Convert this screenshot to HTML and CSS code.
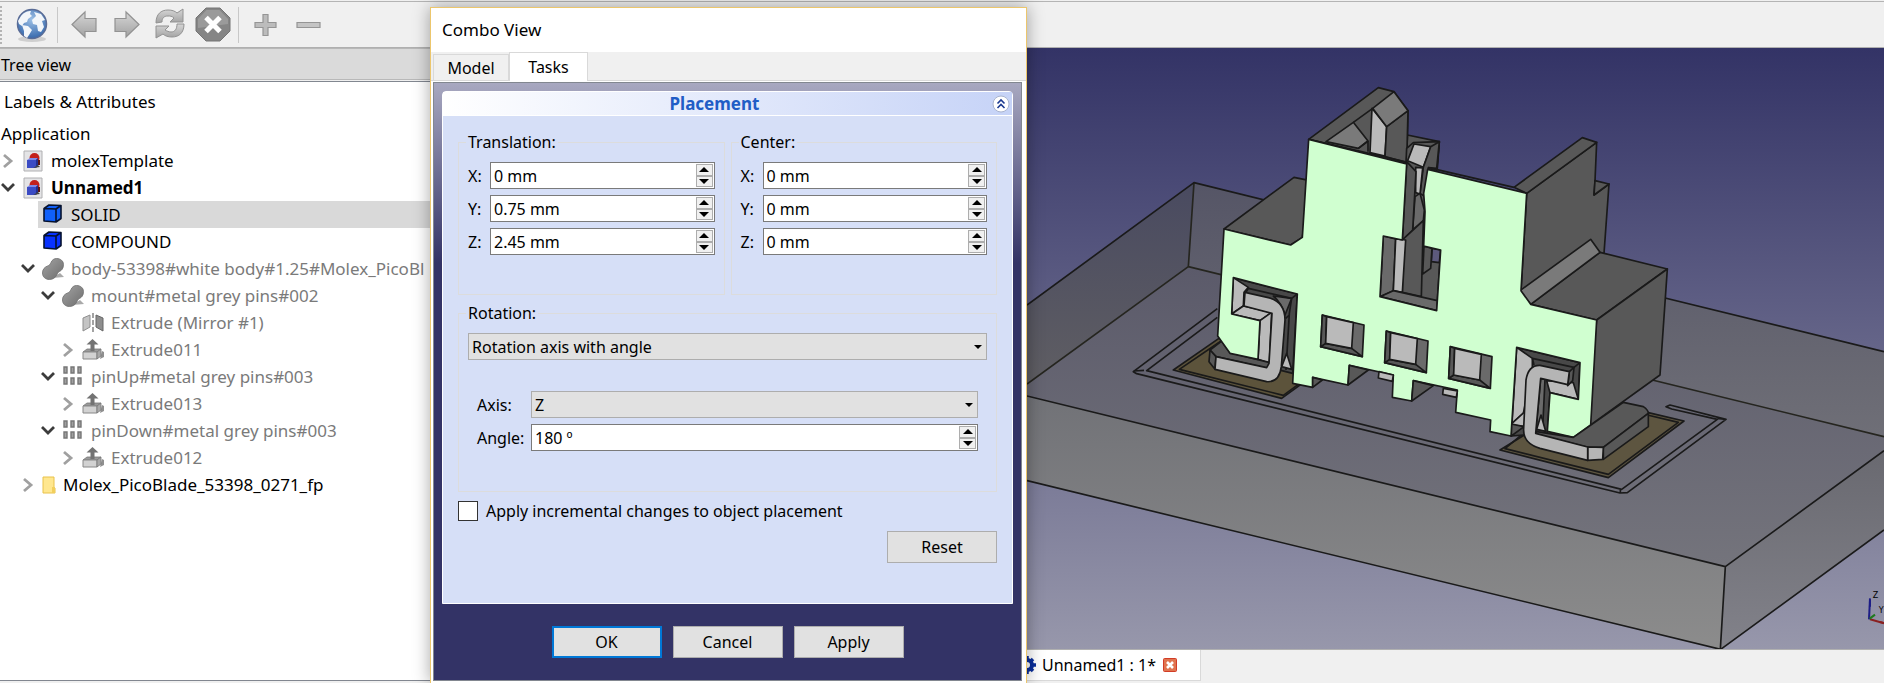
FILE: index.html
```html
<!DOCTYPE html>
<html lang="en">
<head>
<meta charset="utf-8">
<title>Unnamed1</title>
<link rel="stylesheet" href="styles.css">
</head>
<body>
<svg class="defs" width="0" height="0" aria-hidden="true">
  <defs>
    <linearGradient id="metal" x1="0" y1="0" x2="0" y2="1"><stop offset="0" stop-color="#d6d6d6"/><stop offset="1" stop-color="#a2a2a2"/></linearGradient>
    <linearGradient id="stone" x1="0" y1="0" x2="1" y2="1"><stop offset="0" stop-color="#a4a4a4"/><stop offset="1" stop-color="#6c6c6c"/></linearGradient>
    <radialGradient id="ocean" cx=".5" cy=".35" r=".7"><stop offset="0" stop-color="#9cc0e6"/><stop offset="1" stop-color="#2f62a8"/></radialGradient>
    <symbol id="i-closed" viewBox="0 0 18 18"><path d="M4 3l7 6-7 6" fill="none" stroke="#a0a0a0" stroke-width="2.800"/></symbol>
    <symbol id="i-open" viewBox="0 0 18 18"><path d="M2 5l6 6 6-6" fill="none" stroke="#3c3c3c" stroke-width="2.800"/></symbol>
    <symbol id="i-doc" viewBox="0 0 22 22">
      <path d="M2 1h18v20H2z" fill="#e4e4e6" stroke="#b0b0b2"/>
      <circle cx="12.500" cy="8" r="5" fill="#c3201b"/><path d="M16 10h2v5h-2z" fill="#5d1512"/>
      <path d="M5 10l3-2h8l-2 2z" fill="#7d8ae8"/><path d="M5 10h9v8H5z" fill="#3b4bc4"/><path d="M14 10l2-2v8l-2 2z" fill="#222f90"/><path d="M11 18l7-1-2-2z" fill="#444"/>
    </symbol>
    <symbol id="i-cube" viewBox="0 0 22 22">
      <path d="M2 4.500L7 1l12 .5v13L14 18 2 17z" fill="currentColor"/>
      <path d="M2 4.500L14 5v13L2 17zM2 4.500L7 1l12 .5L14 5M19 1.500v13L14 18" fill="none" stroke="#06122e" stroke-width="1.600" stroke-linejoin="round"/>
    </symbol>
    <symbol id="i-fuse" viewBox="0 0 22 22">
      <path d="M10 20l12-1-4-4z" fill="#a9a9a9"/>
      <path d="M14.500 .5c4 0 7 2.500 7 6 0 4-2 6-4 7-2 1-2 2-3 4-1.500 2.500-4 4-7 4-4 0-7-2.500-7-6.500 0-4 2.500-6 5-7 2-.8 2.500-1.500 3.500-3.500 1-2.500 3-4 5.500-4z" fill="url(#stone)" stroke="#6e6e6e" stroke-width=".8"/>
    </symbol>
    <symbol id="i-mirror" viewBox="0 0 22 22">
      <path d="M1 6l7-3v12l-7 4z" fill="#c4c4c4" stroke="#8e8e8e"/><path d="M14 3l7 3v13l-7-4z" fill="#8e8e8e" stroke="#666"/>
      <path d="M11 1v20" stroke="#8c8c8c" stroke-width="1.600" stroke-dasharray="5 2"/>
    </symbol>
    <symbol id="i-extrude" viewBox="0 0 22 22">
      <path d="M18 20l4-2v-5l-2-1z" fill="#8f8f8f"/>
      <path d="M1 13l4-3h14l-4 3z" fill="#9a9a9a" stroke="#777" stroke-width=".8"/><path d="M1 13h14v7H1z" fill="#d2d2d2" stroke="#888"/><path d="M15 13l4-3v7l-4 3z" fill="#a8a8a8" stroke="#777" stroke-width=".8"/>
      <path d="M10.500 0l6 5.500h-4V12h-4V5.500h-4z" fill="#737373"/>
    </symbol>
    <symbol id="i-array" viewBox="0 0 22 22">
      <g fill="#a0a0a0" stroke="#777" stroke-width="1.400"><path d="M2 1h3v6H2zM9 1h3v6H9zM16 1h3v6h-3zM2 12h3v6H2zM9 12h3v6H9zM16 12h3v6h-3z"/></g>
    </symbol>
    <symbol id="i-folder" viewBox="0 0 14 18"><path d="M1 1h11v10l1 1v5H1z" fill="#ffe78f" stroke="#e9c24a"/><path d="M10 11h3v6h-3z" fill="#f2cf5c"/></symbol>
  </defs>
</svg>

<div class="app">
  <header class="toolbar">
    <span class="grip"></span>
    <button class="tool" aria-label="Open website"><svg viewBox="0 0 36 36">
      <ellipse cx="18" cy="32" rx="14" ry="3" fill="#cfcfcf"/>
      <circle cx="18" cy="17" r="14.500" fill="url(#ocean)" stroke="#5a6c96" stroke-width="1.500"/>
      <path d="M7 9c3-4 7-5 10-5l-1 3 2 2-4 3-1 3-3 1-2 3-3-2-1-3zM8 18l6 1 4 4-3 5-2 3-3-2v-5zM20 5l7 2 4 6-3 1 2 6-3 5-3-1-1-6-4-1-1-4 4-4z" fill="#f2f6fa"/></svg></button>
    <span class="rule"></span>
    <button class="tool" aria-label="Back" disabled><svg viewBox="0 0 36 36"><path d="M6 17.500L19 5v6.500h11v13H19V30z" fill="url(#metal)" stroke="#929292" stroke-width="1.200"/></svg></button>
    <button class="tool" aria-label="Forward" disabled><svg viewBox="0 0 36 36"><path d="M30 17.500L17 5v6.500H6v13h11V30z" fill="url(#metal)" stroke="#929292" stroke-width="1.200"/></svg></button>
    <button class="tool" aria-label="Reload" disabled><svg viewBox="0 0 36 36">
      <path d="M4 16C4 7 9 3 16 3c4 0 7 1 9 3l6-4v13H18l4-4c-2-2-4-2-6-2-4 0-6 2-6 6z" fill="url(#metal)" stroke="#929292"/>
      <path d="M32 17c0 9-5 13-12 13-4 0-7-1-9-3l-7 4V19h13l-4 4c2 1 4 2 6 2 4 0 6-3 6-8z" fill="url(#metal)" stroke="#929292"/></svg></button>
    <button class="tool" aria-label="Stop" disabled><svg viewBox="0 0 36 36">
      <path d="M11 1h14l10 10v13L25 34H11L1 24V11z" fill="#858585" stroke="#747474"/><path d="M11.500 3h13L33 12v5L3 21v-9z" fill="#9a9a9a"/>
      <path d="M11 10.500l14 14M25 10.500l-14 14" stroke="#fff" stroke-width="5"/></svg></button>
    <span class="rule"></span>
    <button class="tool" aria-label="Zoom in" disabled><svg viewBox="0 0 36 36"><path d="M16 7.500h5v8h8v5h-8v8h-5v-8H8v-5h8z" fill="#bcbcbc" stroke="#959595" stroke-width="1.200"/></svg></button>
    <button class="tool" aria-label="Zoom out" disabled><svg viewBox="0 0 36 36"><path d="M7 15.500h23v5H7z" fill="#c4c4c4" stroke="#959595" stroke-width="1.200"/></svg></button>
  </header>

  <aside class="dock">
    <h2 class="dock-title">Tree view</h2>
    <div class="tree">
      <div class="tree-head">Labels &amp; Attributes</div>
      <div class="tree-root">Application</div>
      <ul class="rows">
        <li class="row"><svg class="arrow"><use href="#i-closed"/></svg><svg class="icon doc"><use href="#i-doc"/></svg><span>molexTemplate</span></li>
        <li class="row strong"><svg class="arrow"><use href="#i-open"/></svg><svg class="icon doc"><use href="#i-doc"/></svg><span>Unnamed1</span></li>
        <li class="row l1 selected"><svg class="icon cube-a"><use href="#i-cube"/></svg><span>SOLID</span></li>
        <li class="row l1"><span class="arrow"></span><svg class="icon cube-b"><use href="#i-cube"/></svg><span>COMPOUND</span></li>
        <li class="row l1 dim"><svg class="arrow"><use href="#i-open"/></svg><svg class="icon"><use href="#i-fuse"/></svg><span>body-53398#white body#1.25#Molex_PicoBl</span></li>
        <li class="row l2 dim"><svg class="arrow"><use href="#i-open"/></svg><svg class="icon"><use href="#i-fuse"/></svg><span>mount#metal grey pins#002</span></li>
        <li class="row l3 dim"><span class="arrow"></span><svg class="icon"><use href="#i-mirror"/></svg><span>Extrude (Mirror #1)</span></li>
        <li class="row l3 dim"><svg class="arrow"><use href="#i-closed"/></svg><svg class="icon"><use href="#i-extrude"/></svg><span>Extrude011</span></li>
        <li class="row l2 dim"><svg class="arrow"><use href="#i-open"/></svg><svg class="icon"><use href="#i-array"/></svg><span>pinUp#metal grey pins#003</span></li>
        <li class="row l3 dim"><svg class="arrow"><use href="#i-closed"/></svg><svg class="icon"><use href="#i-extrude"/></svg><span>Extrude013</span></li>
        <li class="row l2 dim"><svg class="arrow"><use href="#i-open"/></svg><svg class="icon"><use href="#i-array"/></svg><span>pinDown#metal grey pins#003</span></li>
        <li class="row l3 dim"><svg class="arrow"><use href="#i-closed"/></svg><svg class="icon"><use href="#i-extrude"/></svg><span>Extrude012</span></li>
        <li class="row l1"><svg class="arrow"><use href="#i-closed"/></svg><svg class="icon folder"><use href="#i-folder"/></svg><span>Molex_PicoBlade_53398_0271_fp</span></li>
      </ul>
    </div>
  </aside>

  <section class="dialog" aria-label="Combo View">
    <h1 class="dialog-title">Combo View</h1>
    <div class="tabs" role="tablist">
      <button class="tab" role="tab">Model</button>
      <button class="tab active" role="tab" aria-selected="true">Tasks</button>
    </div>
    <div class="pane">
      <div class="card">
        <div class="card-head"><h2>Placement</h2>
          <button class="collapse" aria-label="Collapse"><svg viewBox="0 0 18 18"><circle cx="9" cy="9" r="8" fill="#fff" stroke="#a9b4cf"/><path d="M5.500 8.500L9 5l3.500 3.500M5.500 13L9 9.500l3.500 3.500" fill="none" stroke="#1c3a90" stroke-width="1.600"/></svg></button>
        </div>
        <div class="card-body">
          <div class="vectors">
            <fieldset>
              <legend>Translation:</legend>
              <div class="field"><label for="tx">X:</label><div class="spin"><input id="tx" value="0 mm"><div class="steps"><button class="up" aria-label="Increase"></button><button class="down" aria-label="Decrease"></button></div></div></div>
              <div class="field"><label for="ty">Y:</label><div class="spin"><input id="ty" value="0.75 mm"><div class="steps"><button class="up" aria-label="Increase"></button><button class="down" aria-label="Decrease"></button></div></div></div>
              <div class="field"><label for="tz">Z:</label><div class="spin"><input id="tz" value="2.45 mm"><div class="steps"><button class="up" aria-label="Increase"></button><button class="down" aria-label="Decrease"></button></div></div></div>
            </fieldset>
            <fieldset>
              <legend>Center:</legend>
              <div class="field"><label for="cx">X:</label><div class="spin"><input id="cx" value="0 mm"><div class="steps"><button class="up" aria-label="Increase"></button><button class="down" aria-label="Decrease"></button></div></div></div>
              <div class="field"><label for="cy">Y:</label><div class="spin"><input id="cy" value="0 mm"><div class="steps"><button class="up" aria-label="Increase"></button><button class="down" aria-label="Decrease"></button></div></div></div>
              <div class="field"><label for="cz">Z:</label><div class="spin"><input id="cz" value="0 mm"><div class="steps"><button class="up" aria-label="Increase"></button><button class="down" aria-label="Decrease"></button></div></div></div>
            </fieldset>
          </div>
          <fieldset class="rotation">
            <legend>Rotation:</legend>
            <div class="combo"><select aria-label="Rotation mode"><option>Rotation axis with angle</option></select></div>
            <div class="axis">
              <div class="field"><label for="axis">Axis:</label><div class="combo"><select id="axis"><option>Z</option></select></div></div>
              <div class="field"><label for="angle">Angle:</label><div class="spin"><input id="angle" value="180 º"><div class="steps"><button class="up" aria-label="Increase"></button><button class="down" aria-label="Decrease"></button></div></div></div>
            </div>
          </fieldset>
          <label class="check"><input type="checkbox">Apply incremental changes to object placement</label>
          <div class="reset"><button class="btn">Reset</button></div>
        </div>
      </div>
      <div class="actions"><button class="btn primary">OK</button><button class="btn">Cancel</button><button class="btn">Apply</button></div>
    </div>
  </section>

  <main class="view">
    <svg class="scene" viewBox="21 24 2571 1803" preserveAspectRatio="xMidYMid slice" role="img" aria-label="Connector model on a board">
      <defs>
        <linearGradient id="floor" gradientUnits="userSpaceOnUse" x1="0" y1="680" x2="0" y2="1580"><stop offset="0" stop-color="#5b5a6a"/><stop offset="1" stop-color="#74747c"/></linearGradient>
        <linearGradient id="wall" gradientUnits="userSpaceOnUse" x1="0" y1="428" x2="0" y2="1190"><stop offset="0" stop-color="#555566"/><stop offset="1" stop-color="#6f6f77"/></linearGradient>
        <linearGradient id="left" gradientUnits="userSpaceOnUse" x1="0" y1="428" x2="0" y2="1032"><stop offset="0" stop-color="#494a60"/><stop offset="1" stop-color="#5f5e63"/></linearGradient>
        <linearGradient id="front" gradientUnits="userSpaceOnUse" x1="0" y1="1068" x2="0" y2="1828"><stop offset="0" stop-color="#717277"/><stop offset="1" stop-color="#8c8c8c"/></linearGradient>
        <linearGradient id="side" gradientUnits="userSpaceOnUse" x1="0" y1="1232" x2="0" y2="1828"><stop offset="0" stop-color="#696970"/><stop offset="1" stop-color="#82828a"/></linearGradient>
        <g id="window" stroke="#1a1a1a" stroke-width="5" stroke-linejoin="round">
          <path class="g2" d="M907 825L1032 855L1027 950L902 920Z"/><path class="g1" d="M902 920L917 910L995 925L1027 950Z"/><path class="g1" d="M907 825L920 830L917 910L902 920Z"/><path class="g4" d="M920 830L1000 848L995 925L917 910Z"/>
        </g>
      </defs>
      <g class="solid">
        <path class="bare" fill="url(#left)" d="M21 795L522 428L505 680L21 1032Z"/>
        <path class="bare" fill="url(#wall)" d="M522 428L2592 935V1190L505 680Z"/>
        <path class="bare" fill="url(#floor)" d="M21 1032L505 680L2592 1190V1232L2116 1580L21 1068Z"/>
        <path class="bare" fill="url(#front)" d="M21 1068L2116 1580L2100 1828L21 1322Z"/>
        <path class="bare" fill="url(#side)" d="M2116 1580L2592 1232V1470L2102 1828Z"/>
        <path class="line faint" d="M21 1032L505 680L2592 1190M522 428L505 680"/>
        <path class="line" d="M21 795L522 428L2592 935M21 1068L2116 1580L2592 1232M21 1322L2102 1828L2592 1470M2116 1580L2101 1828"/>
        <path class="line" d="M592 806L340 995L350 1001L1800 1359L1822 1358L2118 1138L1950 1095L1938 1100L1955 1107L2092 1138L1805 1348L380 992L592 832M340 993L372 991M2092 1135L2118 1138M1801 1345V1360"/>
        <path fill="#5c533b" d="M600 893L460 990L785 1075L850 1028L820 940Z"/><path class="line" d="M612 897L478 988L790 1066L835 1033"/>
        <path fill="#5d5540" d="M1440 1230L1570 1150L1885 1118L1992 1143L1765 1313Z"/><path class="line" d="M1510 1180L1455 1226L1765 1303L1975 1147L1882 1125"/>

        <path class="g1" d="M612 567L822 412L870 422L847 592L812 615Z"/>
        <path class="g1" d="M1520 460L1730 307L1725 422L1722 465L1767 432L1752 640L1710 680L1530 740L1503 752Z"/>
        <path class="g1" d="M1482 442L1687 293L1730 307L1520 460Z"/>
        <path class="g1" d="M1725 422L1767 432L1722 465Z"/>
        <path class="g1" d="M1532 793L1740 637L1942 687L1730 840Z"/>
        <path class="g3" d="M1500 752L1712 598L1740 637L1532 793Z"/>
        <path class="g1" d="M1730 840L1942 687L1920 1005L1660 1192L1700 1155Z"/>

        <path class="g1" d="M1162 285L1258 305L1250 395L1160 372Z"/>
        <path class="g1" d="M866 298L1075 143L1122 155L1164 212L1160 372Z"/>
        <path class="g3" d="M918 305L1000 247L1044 303L1015 325Z"/>
        <path class="line" d="M1000 247L1058 205M1044 303V335M1044 303L1015 325"/>
        <path class="g4" d="M1056 205L1100 260L1095 348L1050 338Z"/>
        <path class="g1" d="M1100 260L1164 212L1160 368L1095 350Z"/>
        <path class="g3" d="M1058 205L1122 155L1164 212L1100 260Z"/>
        <path class="g1" d="M1160 325L1180 308L1258 305L1252 385L1220 390L1210 620L1262 630L1250 812L1080 770L1090 588L1147 600Z"/>
        <path class="g4" d="M1182 312L1232 320L1210 382L1163 362Z"/>
        <path class="g1" d="M1232 320L1258 305L1250 385L1225 383L1215 470L1200 460L1210 382Z"/>
        <path class="g4" d="M1187 382L1208 384L1200 462L1187 458Z"/>
        <path class="g2" d="M1185 470L1200 460L1213 510L1210 542L1178 570Z"/>
        <path class="g1" d="M1160 365L1188 395L1178 570L1147 600Z"/>
        <path class="g1" d="M1147 600L1210 542L1204 770L1147 757Z"/>
        <path class="g2" d="M1090 588L1127 597L1120 752L1080 770Z"/>
        <path class="g4" d="M1127 597L1157 600L1147 757L1120 752Z"/>
        <path fill="#5d5a7c" d="M1236 625L1262 630L1258 668L1234 665Z"/>
        <path class="g1" d="M1212 618L1236 625L1232 685L1208 702Z"/>
        <path class="g2" d="M1080 770L1120 752L1252 782L1250 812Z"/>
        <path class="line" d="M866 298L1160 366M1225 383L1482 442"/>

        <path class="g0" d="M640 713L832 762L818 1000L740 980L635 822Z"/>
        <path class="g2" d="M760 768L815 775L795 825Q785 790 760 768Z"/>
        <path class="line" d="M685 745L815 775L832 762M815 775L808 820L798 990M685 745L678 757M797 835L808 825"/>
        <path class="g4" d="M640 713L685 742L672 757L670 798L635 822Z"/>
        <path class="g4" d="M635 822L670 798L755 817L720 842Z"/>
        <path class="g4" d="M720 842L755 817L748 970L714 958Z"/>
        <path class="g4" d="M800 940L815 988L785 980Z"/>
        <path class="g1" d="M570 930L605 903L630 938L750 968L742 985L588 950Z"/>
        <path class="g1" d="M570 930L588 950L585 988L567 965Z"/>
        <path class="g5" d="M675 757L745 773Q795 785 795 840L784 980Q778 1028 740 1025L585 988L588 950L740 983L747 970L756 820L672 798Z"/>

        <path class="g0" d="M1490 922L1680 968L1675 1078L1590 1058L1582 1180L1473 1188Z"/>
        <path class="g4" d="M1490 922L1537 955V985L1510 1120L1476 1150Z"/>
        <path class="g4" d="M1476 1150L1520 1110V1160L1474 1155Z"/>
        <path class="g1" d="M1474 1152L1512 1160L1474 1188Z"/>
        <path class="line" d="M1537 955L1662 982L1680 968M1537 955L1542 975"/>
        <path class="g4" d="M1580 1022L1660 1028L1675 1078L1590 1058Z"/>
        <path class="g2" d="M1562 1016L1575 1018L1568 1165L1548 1170Z"/>
        <path class="g4" d="M1563 1125L1577 1174L1550 1168Z"/>

        <path class="green" d="M866 298L1160 372L1147 600L1090 588L1080 770L1250 812L1262 630L1211 618L1215 515L1211 460L1223 388L1520 460L1503 752L1532 793L1730 840L1712 1155L1660 1192L1582 1174L1590 1058L1675 1078L1680 968L1490 922L1473 1188L1410 1175L1412 1140L1307 1117L1312 1050L1180 1022L1175 1083L1117 1072L1120 1005L988 976L984 1035L878 1012V1042L818 1030L832 762L640 713L635 822L720 842L714 958L630 940L593 888L612 567L812 615L847 592Z"/>
        <path class="g1" d="M988 976L1045 990L984 1035Z"/><path class="g1" d="M878 1012L907 1020L878 1042Z"/><path class="g1" d="M1180 1022L1240 1037L1175 1083Z"/>
        <path class="g4" d="M1077 995L1120 1005L1117 1024L1075 1014Z"/><path class="g4" d="M1270 1045L1312 1053L1309 1072L1268 1063Z"/>
        <use href="#window"/><use href="#window" x="192" y="48"/><use href="#window" x="384" y="95"/>

        <path class="g1" d="M1550 1175L1660 1192L1810 1087L1870 1100Q1885 1110 1885 1120L1750 1222H1703L1547 1182Z"/>
        <path class="g1" d="M1750 1222L1885 1120V1160L1750 1258Z"/>
        <path class="g5" d="M1703 1221L1750 1222L1748 1258L1703 1261Z"/>
        <path class="g1" d="M1648 995L1662 982L1658 1022L1643 1037Z"/>
        <path class="g5" d="M1560 976L1648 995L1643 1034L1562 1015L1547 1180L1703 1221V1261L1560 1225Q1508 1210 1511 1165L1518 1020Q1525 975 1560 976Z"/>
      </g>
      <g class="gizmo">
        <path d="M2550 1675L2547 1738" stroke="#1d1d86"/><path d="M2550 1680V1700" stroke="#1d1d86" stroke-width="11"/>
        <path d="M2550 1738L2592 1750" stroke="#8a2020"/><path d="M2580 1746L2592 1749" stroke="#8a2020" stroke-width="11"/>
        <path d="M2549 1736L2565 1724" stroke="#1f7a1f" stroke-width="8"/>
        <text x="2558" y="1673">Z</text><text x="2576" y="1719">Y</text>
      </g>
    </svg>
  </main>

  <footer class="docs">
    <div class="doc-tab">
      <svg class="gear" viewBox="0 0 18 18"><circle cx="9" cy="9" r="5" fill="none" stroke="#0b2f9c" stroke-width="4"/><path d="M9 0v3M9 15v3M0 9h3M15 9h3M3 3l2 2M13 13l2 2M15 3l-2 2M5 13l-2 2" stroke="#0b2f9c" stroke-width="3.500"/></svg>
      <span>Unnamed1 : 1*</span>
      <button class="close" aria-label="Close"><svg viewBox="0 0 14 14"><rect x=".5" y=".5" width="13" height="13" rx="1" fill="#e0744f" stroke="#d23c26"/><path d="M4 4l6 6M10 4l-6 6" stroke="#fff" stroke-width="2.600"/></svg></button>
    </div>
  </footer>
</div>
</body>
</html>
```

FILE: styles.css
```css
* { box-sizing: border-box; }

body {
  margin: 0;
  background: #f0f0f0;
  color: #000;
  font: 17px/24px "Noto Sans", "Open Sans", sans-serif;
}

button, input, select { font: inherit; color: inherit; margin: 0; }
button { padding: 0; border: 0; background: none; }
h1, h2, ul { margin: 0; padding: 0; font: inherit; }
svg { display: block; }
.defs { position: absolute; }

.app {
  display: grid;
  grid-template-columns: 430px 597px minmax(0, 1fr);
  grid-template-rows: 48px minmax(0, 1fr) 34px;
  height: 100vh;
  overflow: hidden;
}

/* Toolbar */
.toolbar {
  grid-area: 1 / 1 / 2 / -1;
  display: flex;
  align-items: center;
  margin-top: 1px;
  border-top: 1px solid #b4b4b4;
  border-bottom: 1px solid #b0b0b0;
  background: #f0f0f0;
}
.grip { width: 2px; height: 38px; margin-right: 12px; border-right: 2px dotted #b4b4b4; }
.tool { width: 36px; height: 36px; margin-right: 7px; }
.rule { width: 1px; height: 36px; margin-right: 8px; background: #c8c8c8; }

/* Tree dock */
.dock { grid-area: 2 / 1 / 4 / 2; display: flex; flex-direction: column; min-width: 0; padding-bottom: 2px; }
.dock-title { height: 32px; padding: 4px 1px; border: 1px solid #b8b8b8; border-width: 1px 0; background: #dadada; font-size: 16px; }
.tree { flex: 1; margin-top: 1px; overflow: hidden; border-top: 1px solid #828790; border-bottom: 1px solid #828790; background: #fff; white-space: nowrap; }
.tree-head { padding: 8px 4px; }
.tree-root { padding: 0 1px; height: 25px; }
.rows { list-style: none; }
.row { display: flex; align-items: center; height: 27px; }
.arrow { flex: none; width: 18px; height: 18px; margin-right: 4px; }
.icon { flex: none; width: 22px; height: 22px; margin-right: 7px; }
.folder { width: 14px; height: 18px; }
.l1 { padding-left: 20px; }
.l2 { padding-left: 40px; }
.l3 { padding-left: 60px; }
.strong { font-weight: 700; }
.dim { color: #7a7a7a; }
.selected { margin-left: 38px; padding-left: 4px; background: #d9d9d9; }
.cube-a { color: #1060fa; }
.cube-b { color: #0832ff; }

/* Floating window */
.dialog {
  grid-area: 1 / 2 / -1 / 3;
  z-index: 1;
  display: flex;
  flex-direction: column;
  margin-top: 7px;
  padding-bottom: 2px;
  border: 1px solid #ecc66c;
  border-bottom: 0;
  background: #fff;
  box-shadow: 0 0 16px rgba(0, 0, 0, .35);
  font-size: 16px;
}
.dialog-title { height: 44px; padding: 10px 11px; font-size: 17px; }
.tabs { display: flex; align-items: flex-end; height: 29px; padding-left: 2px; background: #f0f0f0; border-bottom: 1px solid #d9d9d9; }
.tab { width: 76px; height: 26px; border: 1px solid #d9d9d9; border-bottom: 0; }
.tab.active { width: 79px; height: 29px; margin-bottom: -1px; background: #fff; }
.pane {
  flex: 1;
  display: flex;
  flex-direction: column;
  margin: 1px 4px 0 2px;
  padding: 8px;
  border: 1px solid #828790;
  background: linear-gradient(#a8a8c0, #333366 180px);
}
.card { border: 1px solid #fff; border-radius: 4px 4px 0 0; background: #d6dff7; }
.card-head { display: flex; align-items: center; height: 24px; padding: 0 2px 0 0; border-bottom: 1px solid #fff; background: linear-gradient(90deg, #fff, #c6d3f7); }
.card-head h2 { flex: 1; padding-right: 6px; color: #215dc6; font-size: 17px; font-weight: 700; text-align: center; }
.collapse { width: 18px; height: 18px; }
.card-body { padding: 14px 15px 40px; }
.vectors { display: grid; grid-template-columns: 1fr 1fr; gap: 6px; }
fieldset { min-width: 0; height: 165px; margin: 0; padding: 8px 9px; border: 1px solid #dcdcdc; }
legend { height: 24px; margin-left: -2px; padding: 0 2px; }
.field { display: flex; align-items: center; margin-bottom: 6px; }
.field label { flex: none; width: 22px; }
.spin { flex: 1; display: flex; min-width: 0; height: 27px; padding: 1px; border: 1px solid #7a7a7a; background: #fff; }
.spin input { flex: 1; min-width: 0; padding: 0 2px; border: 0; outline: 0; background: none; }
.steps { display: flex; flex-direction: column; width: 17px; }
.steps button { flex: 1; display: grid; place-items: center; border: 1px solid #adadad; background: #f0f0f0; }
.steps button::after { content: ""; border: 5px solid transparent; border-top: 0; border-bottom: 5px solid #000; }
.steps .down::after { border-top: 5px solid #000; border-bottom: 0; }
.combo { flex: 1; display: grid; align-items: center; height: 27px; }
.combo select { grid-area: 1 / 1; height: 27px; padding: 0 3px; border: 1px solid #adadad; border-radius: 0; appearance: none; background: #e1e1e1; }
.combo::after { content: ""; grid-area: 1 / 1; justify-self: end; margin-right: 5px; border: 4px solid transparent; border-top-color: #000; border-bottom: 0; pointer-events: none; }
.rotation { height: 191px; margin-top: 6px; }
.axis { padding: 31px 9px 0; }
.axis .field label { width: 54px; }
.check { display: flex; align-items: center; gap: 8px; height: 20px; margin-top: 9px; }
.check input { width: 20px; height: 20px; border: 1px solid #333; appearance: none; background: #fff; }
.reset { display: flex; justify-content: flex-end; margin-top: 10px; }
.btn { width: 110px; height: 32px; border: 1px solid #adadad; background: #e1e1e1; }
.primary { border: 2px solid #0078d7; }
.actions { display: flex; justify-content: center; gap: 11px; margin-top: 22px; }

/* 3D view */
.view { grid-area: 2 / 3; min-width: 0; min-height: 0; background: linear-gradient(#333366, #9797ab); }
.scene { width: 100%; height: 100%; }
.solid path { stroke: #1a1a1a; stroke-width: 5; stroke-linejoin: round; }
.solid .bare { stroke: none; }
.solid .line { fill: none; }
.solid .faint { stroke: #25251f; }
.g0 { fill: #484848; }
.g1 { fill: #585858; }
.g2 { fill: #6a6a6a; }
.g3 { fill: #7a7a7a; }
.g4 { fill: #bababa; }
.g5 { fill: #b5b5b5; }
.green { fill: #d0ffd0; }
.gizmo { font: 24px "DejaVu Sans", sans-serif; }
.gizmo path { stroke-width: 6; }

/* Open documents */
.docs { grid-area: 3 / 3; border-top: 1px solid #b0b0b0; }
.doc-tab { display: flex; align-items: center; width: 174px; height: 31px; border: 1px solid #d9d9d9; border-width: 0 1px 1px 0; background: #fff; font-size: 16px; }
.gear { flex: none; width: 18px; height: 18px; margin: 0 6px 0 -9px; }
.doc-tab span { flex: none; width: 121px; white-space: nowrap; }
.close { flex: none; width: 14px; height: 14px; }
```
